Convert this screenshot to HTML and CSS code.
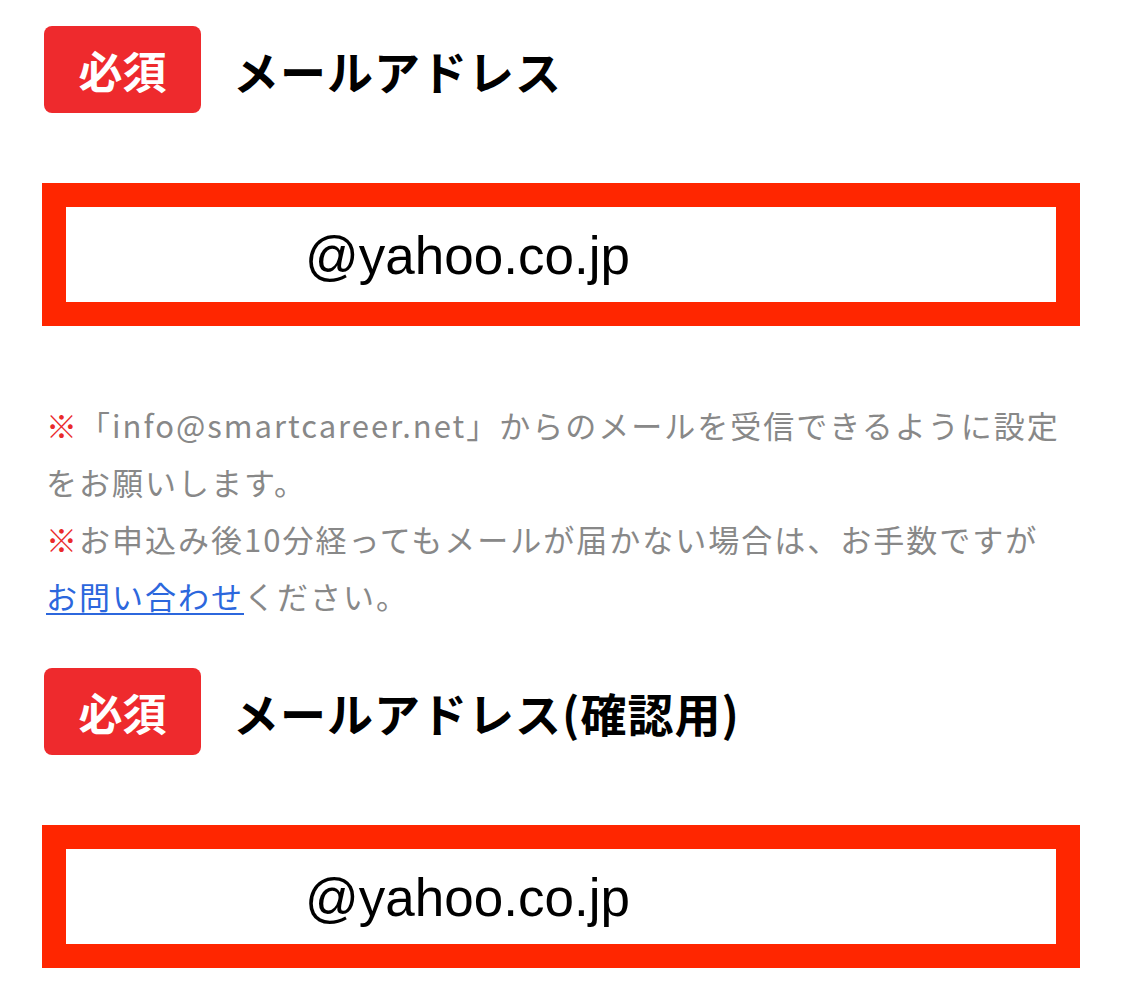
FILE: index.html
```html
<!DOCTYPE html>
<html lang="ja">
<head>
  <meta charset="UTF-8" />
  <title>メールアドレス</title>
  <meta name="viewport" content="width=device-width, initial-scale=1.0"/>
  <link rel="stylesheet" href="styles.css">
</head>
<body>

<div class="form">
  <div class="field-head">
    <span class="required">必須</span>
    <span class="field-label">メールアドレス</span>
  </div>

  <div class="email-box">
    <div class="email-value">@yahoo.co.jp</div>
  </div>

  <div class="notes">
    <p><span class="mark">※</span>「info@smartcareer.net」からのメールを受信できるように設定<br>をお願いします。</p>
    <p><span class="mark">※</span>お申込み後10分経ってもメールが届かない場合は、お手数ですが<br><a href="#">お問い合わせ</a>ください。</p>
  </div>

  <div class="field-head">
    <span class="required">必須</span>
    <span class="field-label">メールアドレス(確認用)</span>
  </div>

  <div class="email-box">
    <div class="email-value">@yahoo.co.jp</div>
  </div>
</div>

</body>
</html>
```

FILE: styles.css
```css
body {
  margin: 0;
  background: #fff;
  font-family: "Noto Sans CJK JP", "Noto Sans", sans-serif;
  color: #000;
}

.form {
  padding: 26px 45px 0 42px;
}

.field-head {
  display: flex;
  align-items: center;
  gap: 32px;
  margin-left: 2px;
  height: 87px;
}

.required {
  display: flex;
  align-items: center;
  justify-content: center;
  width: 157px;
  height: 87px;
  background: #ee2a2d;
  color: #fff;
  border-radius: 8px;
  font-size: 44px;
  font-weight: 700;
}

.field-label {
  font-size: 46px;
  font-weight: 700;
  letter-spacing: 1px;
}

.email-box {
  margin-top: 70px;
  border: 24px solid #ff2600;
  height: 95px;
  display: flex;
  align-items: center;
}

.email-value {
  padding-left: 239px;
  padding-top: 2px;
  font-family: "Liberation Sans", Arial, sans-serif;
  font-size: 53px;
}

.notes {
  margin-top: 70px;
  margin-left: 4px;
  margin-bottom: 44px;
  font-size: 31px;
  line-height: 57px;
  letter-spacing: 2px;
  color: #888;
  white-space: nowrap;
}

.notes p {
  margin: 0;
}

.mark {
  color: #ea2a2a;
  font-weight: 700;
}

.notes a {
  color: #2c67dd;
  text-decoration: underline;
  text-decoration-thickness: 2px;
  text-underline-offset: 4px;
}
```
